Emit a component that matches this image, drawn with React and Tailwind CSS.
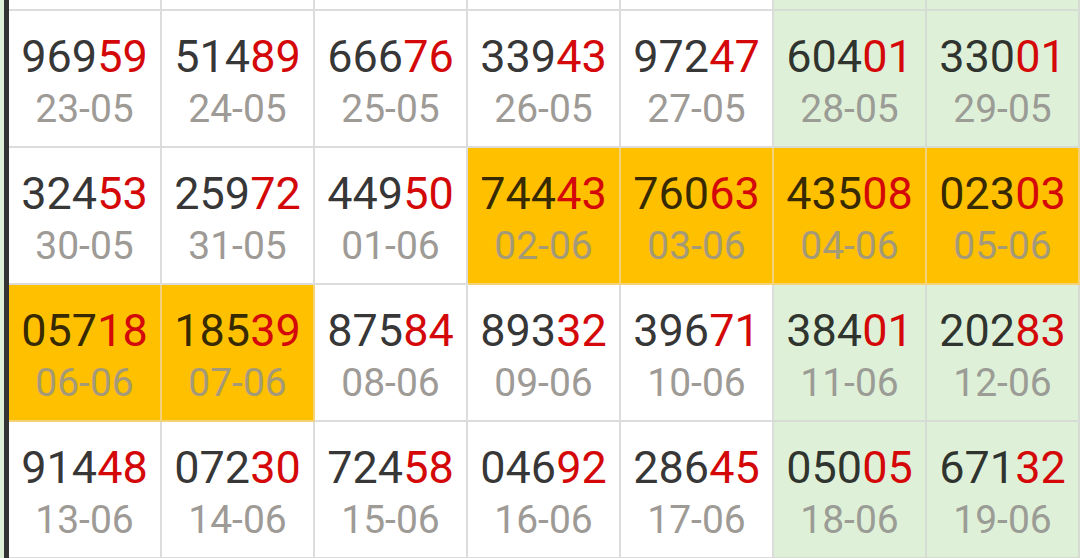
const rows = [
  [
    ['96959', '23-05'], ['51489', '24-05'], ['66676', '25-05'], ['33943', '26-05'],
    ['97247', '27-05'], ['60401', '28-05'], ['33001', '29-05'],
  ],
  [
    ['32453', '30-05'], ['25972', '31-05'], ['44950', '01-06'], ['74443', '02-06'],
    ['76063', '03-06'], ['43508', '04-06'], ['02303', '05-06'],
  ],
  [
    ['05718', '06-06'], ['18539', '07-06'], ['87584', '08-06'], ['89332', '09-06'],
    ['39671', '10-06'], ['38401', '11-06'], ['20283', '12-06'],
  ],
  [
    ['91448', '13-06'], ['07230', '14-06'], ['72458', '15-06'], ['04692', '16-06'],
    ['28645', '17-06'], ['05005', '18-06'], ['67132', '19-06'],
  ],
];

// w = white, g = green (weekend), y = yellow (highlight)
const tones = [
  ['w', 'w', 'w', 'w', 'w', 'g', 'g'],
  ['w', 'w', 'w', 'y', 'y', 'y', 'y'],
  ['y', 'y', 'w', 'w', 'w', 'g', 'g'],
  ['w', 'w', 'w', 'w', 'w', 'g', 'g'],
];

const cellTone = {
  w: 'bg-white border-[#dcdcdc]',
  g: 'bg-[#dff0d8] border-[#d6dcd3]',
  y: 'bg-[#ffc000] border-[#f3d27a]',
};

const dateTone = {
  w: 'text-[#9e9a96]',
  g: 'text-[#9a9c95]',
  y: 'text-[#a59a78]',
};

function Cell({ num, date, tone }) {
  return (
    <div className={`flex h-[137px] flex-col items-center justify-center border-r-2 border-b-2 pt-[5px] ${cellTone[tone]}`}>
      <div className="text-[45px] leading-[48px] text-black/80">
        {num.slice(0, 3)}
        <span className="text-[#d40808]">{num.slice(3)}</span>
      </div>
      <div className={`mt-[8px] text-[39px] leading-[40px] ${dateTone[tone]}`}>{date}</div>
    </div>
  );
}

export default function App() {
  return (
    <div className="flex h-[558px] w-[1080px] overflow-hidden bg-white" style={{ fontFamily: 'Roboto, "Noto Sans", sans-serif' }}>
      <div className="w-[4px] bg-[#dff0d8]" />
      <div className="w-[5px] bg-[#333333]" />
      <div className="grid flex-1 grid-cols-7 content-start">
        {['w', 'w', 'w', 'w', 'w', 'g', 'g'].map((t, i) => (
          <div key={`top-${i}`} className={`h-[11px] border-r-2 border-b-2 ${cellTone[t]}`} />
        ))}
        {rows.map((row, r) =>
          row.map(([num, date], c) => (
            <Cell key={`${r}-${c}`} num={num} date={date} tone={tones[r][c]} />
          ))
        )}
      </div>
    </div>
  );
}
